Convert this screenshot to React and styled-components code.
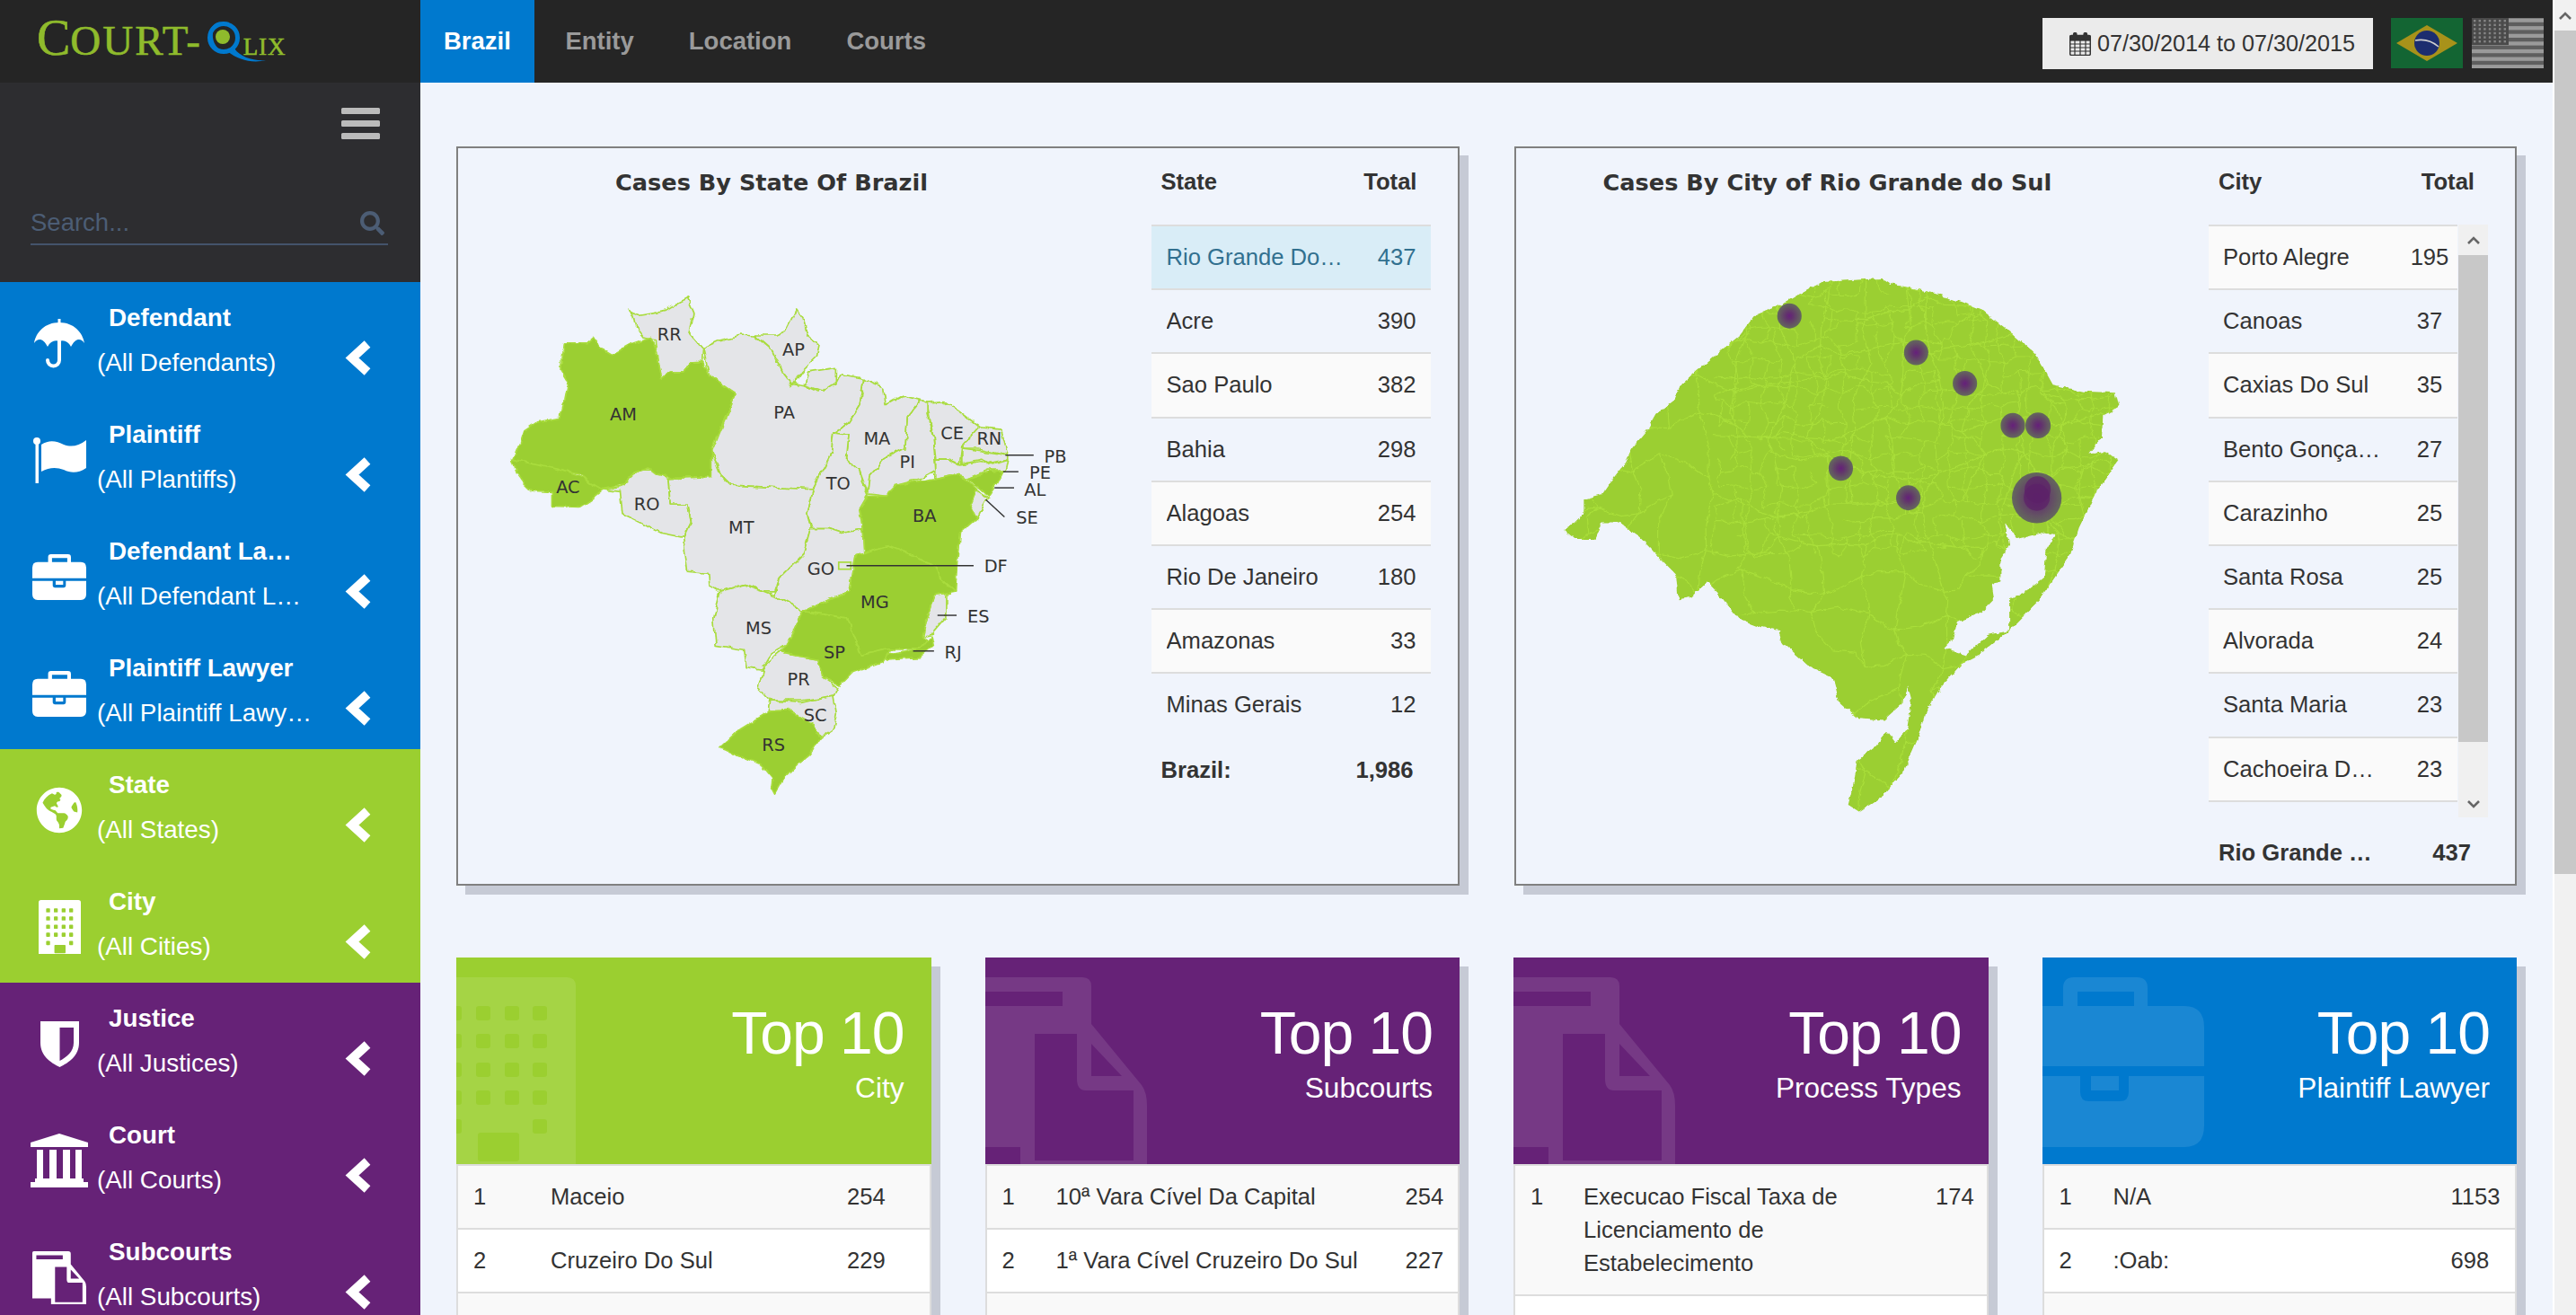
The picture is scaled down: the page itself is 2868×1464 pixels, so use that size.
import React, { useMemo } from 'react';
import styled, { createGlobalStyle } from 'styled-components';
import { FaGlobeAmericas, FaSearch } from 'react-icons/fa';

const BLUE = '#0079ce';
const GREEN = '#9bcf30';
const PURPLE = '#662277';
const PAGE = '#f0f4fc';

const GlobalStyle = createGlobalStyle`
  html, body { margin: 0; padding: 0; overflow: hidden; background: ${PAGE}; }
  * { box-sizing: border-box; }
  body { font-family: "Liberation Sans", Arial, sans-serif; color: #333; font-size: 25.6px; }
`;

const Page = styled.div`display: flex; height: 100vh; overflow: hidden;`;
const Sidebar = styled.aside`width: 468px; flex: none; background: #2d2d30; overflow: hidden;`;
const LogoBar = styled.div`height: 92px; background: #252525; display: flex; align-items: baseline; padding: 11px 0 0 41px; font-family: "Liberation Serif", serif; color: #8fbb2c; line-height: 50px; -webkit-text-stroke: 0.6px #8fbb2c;`;
const LogoBig = styled.span`font-size: 56px;`;
const LogoMid = styled.span`font-size: 47px; letter-spacing: 2px;`;
const LogoSmall = styled.span`font-size: 27px; margin-left: -27px; letter-spacing: 0.8px;`;
const LogoMark = styled.svg`width: 68px; height: 50px; margin: 0 0 0 5px; flex: none; overflow: visible;`;

const SideTools = styled.div`height: 222px; padding: 28px 45px 0 34px; display: flex; flex-direction: column;`;
const Burger = styled.div`align-self: flex-end; width: 43px; display: flex; flex-direction: column; gap: 7px; margin-right: 0;`;
const BurgerBar = styled.span`display: block; height: 7px; background: #bbb; border-radius: 1.5px;`;
const SearchBox = styled.div`margin-top: 70px; margin-right: -9px; height: 48px; border-bottom: 2px solid #44536b; display: flex; justify-content: space-between; align-items: center; color: #4c5d75; font-size: 27.5px; padding-right: 4px;`;

const NavGroup = styled.div`background: ${p => p.$bg};`;
const NavItem = styled.div`height: 130px; display: flex; color: #fff;`;
const IconCell = styled.div`width: 132px; height: 136px; flex: none; display: flex; align-items: center; justify-content: center;`;
const TextCell = styled.div`width: 275px; flex: none; margin-left: -24px; padding-top: 15px; line-height: 50px;`;
const NavTitle = styled.div`font-weight: 700; font-size: 27.8px; padding-left: 13px; width: 223px; white-space: nowrap; overflow: hidden; text-overflow: ellipsis;`;
const NavSub = styled.div`font-size: 27.8px; width: 240px; white-space: nowrap; overflow: hidden; text-overflow: ellipsis;`;
const ChevronCell = styled.svg`width: 30px; height: 45px; margin-top: 62px; flex: none;`;

const Column = styled.div`flex: 1; min-width: 0; display: flex; flex-direction: column;`;
const TopBar = styled.header`height: 92px; flex: none; background: #252525; display: flex; align-items: stretch; padding-right: 10px;`;
const Tab = styled.div`display: flex; align-items: center; padding: 0 ${p => (p.$active ? 26 : 30.5)}px; margin-left: ${p => (p.$first ? 4 : 0)}px; background: ${p => (p.$active ? BLUE : 'transparent')}; color: ${p => (p.$active ? '#fff' : '#9a9a9a')}; font-weight: 700; font-size: 27.5px;`;
const TopRight = styled.div`margin-left: auto; display: flex; align-items: flex-start; padding-top: 20px;`;
const DateButton = styled.div`width: 368px; height: 57px; background: #ebebeb; display: flex; align-items: center; gap: 7px; padding-left: 30px; font-size: 25.2px; color: #333; margin-right: 20px;`;
const Flag = styled.svg`width: 80px; height: 56px; margin-right: ${p => (p.$gap ? 10 : 0)}px; display: block;`;

const Content = styled.main`flex: 1; padding: 71px 40px 0; min-height: 0;`;
const MapRow = styled.div`display: grid; grid-template-columns: 1fr 1fr; gap: 61px; height: 823px;`;
const MapCard = styled.section`border: 2px solid #808080; box-shadow: 10px 10px 0 #c6cad5; display: grid; grid-template-columns: 1fr 311px; grid-template-rows: minmax(0, 1fr); padding-right: 30px; min-width: 0; min-height: 0;`;
const MapArea = styled.div`min-width: 0;`;
const CardTitle = styled.h2`margin: 0; padding-left: ${p => p.$indent}px; font: 700 25.6px/76px "DejaVu Sans", Verdana, sans-serif; color: #333; white-space: nowrap;`;
const MapSvg = styled.svg`display: block; margin: ${p => p.$mt}px 0 0 ${p => p.$ml}px; width: ${p => p.$w}px; height: ${p => p.$h}px;`;
const MapLabel = styled.text`font: 40px "DejaVu Sans", sans-serif; fill: #333; text-anchor: middle; dominant-baseline: central;`;

const TableCol = styled.div`min-width: 0;`;
const HeadRow = styled.div`height: 85px; display: flex; justify-content: space-between; padding: 0 15px 11px 11px; align-items: center; font-weight: 700; font-size: 25.6px;`;
const StatRow = styled.div`height: 71.2px; border-top: 2px solid #ddd; display: flex; align-items: center; padding-left: ${p => (p.$compact ? 16 : 17)}px; padding-right: ${p => (p.$compact ? 0 : 16)}px; justify-content: space-between; background: ${p => (p.$active ? '#d9edf7' : p.$odd ? '#fafafa' : 'transparent')}; color: ${p => (p.$active ? '#31708f' : '#333')}; &:last-child { border-bottom: ${p => (p.$compact ? '2px solid #ddd' : 'none')}; height: ${p => (p.$compact ? 73.2 : 71.2)}px; }`;
const StatName = styled.span`width: ${p => (p.$compact ? 180 : 202)}px; white-space: nowrap; overflow: hidden; text-overflow: ellipsis;`;
const StatValue = styled.span`${p => (p.$compact ? 'width: 62px; text-align: center;' : 'text-align: right;')}`;
const ScrollWrap = styled.div`display: flex; height: 660px; gap: 1px;`;
const RowList = styled.div`width: 277px; flex: none; overflow: hidden;`;
const MiniScroll = styled.div`width: 33px; flex: none; background: #f0f0f0; display: flex; flex-direction: column; align-items: center;`;
const ScrollCap = styled.div`height: ${p => p.$h}px; width: 100%; display: flex; align-items: ${p => p.$align || 'center'}; justify-content: center; padding-bottom: ${p => p.$pb || 0}px;`;
const ScrollThumb = styled.div`width: 100%; height: ${p => p.$h}px; background: #c8c8c8; flex: none;`;
const FootRow = styled.div`height: ${p => p.$h}px; display: flex; justify-content: space-between; align-items: center; padding: 0 19px 0 11px; font-weight: 700;`;
const FootName = styled.span`max-width: 180px; white-space: nowrap; overflow: hidden; text-overflow: ellipsis;`;

const TopGrid = styled.div`display: grid; grid-template-columns: repeat(4, 1fr); gap: 60px; margin-top: 80px;`;
const TopPanel = styled.section`background: #fff; box-shadow: 10px 10px 0 #c6cad5; min-width: 0;`;
const TopHead = styled.div`position: relative; height: 230px; overflow: hidden; background: ${p => p.$bg}; color: #fff; text-align: right; padding: 46px 30px 0 0;`;
const HeadGlyph = styled.svg`position: absolute; left: ${p => p.$left}px; top: 22px; width: ${p => p.$w}px; height: ${p => p.$h}px; fill: #fff; opacity: 0.1;`;
const TopTitle = styled.div`position: relative; font-size: 66px; line-height: 76px; letter-spacing: -1px;`;
const TopSub = styled.div`position: relative; font-size: 31.6px; line-height: 46px;`;
const RankRow = styled.div`display: grid; grid-template-columns: ${p => p.$cols}; padding: 15.5px 0 16.5px 17px; line-height: 37px; border: 2px solid #ddd; border-width: 2px 2px 0; background: ${p => (p.$odd ? '#f9f9f9' : '#fff')}; min-height: 71px;`;
const RankName = styled.div`padding-right: 22px;`;

const ScrollBar = styled.div`width: 26px; flex: none; background: #f1f1f1; border-left: 2px solid #fff; display: flex; flex-direction: column;`;

const Chevron = () => (
  <ChevronCell viewBox="0 0 30 45"><polyline points="26,7 9,22.5 26,38" fill="none" stroke="#fff" strokeWidth="10" /></ChevronCell>
);
const Arrow = ({ up }) => (
  <svg width="14" height="9" viewBox="0 0 14 9"><polyline points={up ? '1,8 7,2 13,8' : '1,1 7,7 13,1'} fill="none" stroke="#666" strokeWidth="2.6" /></svg>
);

const DOC = 'M-30 22H108Q118 22 118 32V74L174 142Q180 150 180 165V234H39V211H-36V28Q-36 22-30 22ZM-20 38V54H86V38ZM55 85V226H165V148H112Q102 148 102 135V85ZM118 96V132H152Z';
const CASE = 'M-20 54H158Q180 54 180 78V121H-42V78Q-42 54-20 54ZM-42 132H42V150Q42 160 52 160H86Q96 160 96 150V132H180V187Q180 211 158 211H-20Q-42 211-42 187ZM54 132H85V148H54ZM23 54V34Q23 22 35 22H105Q117 22 117 34V54H102V38H39V54Z';
const makeBuilding = () => {
  let d = 'M-31 22H123Q133 22 133 32V230H-41V32Q-41 22-31 22Z';
  const win = (x, y, w = 16, h = 16) => `M${x + 3} ${y}h${w - 6}q3 0 3 3v${h - 6}q0 3-3 3h-${w - 6}q-3 0-3-3v-${h - 6}q0-3 3-3z`;
  [54, 85, 117, 148].forEach(y => [-10, 22, 54, 85].forEach(x => { d += win(x, y); }));
  d += win(-10, 180) + win(85, 180) + win(24, 195, 46, 32);
  return d;
};
const BUILDING = makeBuilding();

const Umbrella = () => (
  <svg width="56" height="55" viewBox="0 0 56 55">
    <rect x="26.5" y="0" width="3" height="6" fill="#fff" />
    <path fill="#fff" d="M0 27C2 15 12 4 28 4C44 4 54 15 56 27C52 21 46 21 41 31C38 25 33 23 28 25C23 23 18 25 15 31C10 21 4 21 0 27Z" />
    <path fill="none" stroke="#fff" strokeWidth="4" strokeLinecap="round" d="M28 25V46a6.5 6.5 0 0 1-13 0" />
  </svg>
);
const FlagIcon = () => (
  <svg width="59" height="51" viewBox="0 0 59 51">
    <circle cx="4" cy="4" r="4" fill="#fff" /><rect x="2.5" y="6" width="3.5" height="45" fill="#fff" />
    <path fill="#fff" d="M9 8C18 2 26 4 34 8C42 11 50 10 59 3V34C50 40 42 40 34 36C26 33 18 33 9 38Z" />
  </svg>
);
const Briefcase = () => <svg width="60" height="51" viewBox="-42 22 222 189" preserveAspectRatio="none"><path fill="#fff" fillRule="evenodd" d={CASE} /></svg>;
const Building = () => <svg width="47" height="60" viewBox="-41 22 174 208" preserveAspectRatio="none"><path fill="#fff" fillRule="evenodd" d={BUILDING} /></svg>;
const Shield = () => <svg width="43" height="51" viewBox="0 0 43 51"><path fill="#fff" fillRule="evenodd" d="M0 0H43V24C43 38 32 46 21.5 51C11 46 0 38 0 24ZM21.5 7V44C29 40 37 34 37 24V7Z" /></svg>;
const Court = () => (
  <svg width="64" height="60" viewBox="0 0 64 60" fill="#fff">
    <path d="M32 0L64 10V15H0V10Z" />
    <rect x="7" y="18" width="7" height="33" /><rect x="21" y="18" width="8" height="33" /><rect x="36" y="18" width="8" height="33" /><rect x="50" y="18" width="7" height="33" />
    <rect x="5" y="50" width="54" height="4" /><rect x="0" y="54" width="64" height="6" />
  </svg>
);
const Files = () => <svg width="60" height="59" viewBox="-36 22 216 212" preserveAspectRatio="none"><path fill="#fff" fillRule="evenodd" d={DOC} /></svg>;
const Calendar = () => (
  <svg width="24" height="26" viewBox="0 0 24 26" fill="none" stroke="#333" strokeWidth="1.2">
    <rect x="0.7" y="3.5" width="22.6" height="22" rx="1.5" fill="#ebebeb" strokeWidth="1.5" />
    <rect x="1" y="4" width="22" height="5" fill="#333" />
    <path d="M1 13h22M1 17h22M1 21h22M6 9v16M12 9v16M18 9v16" />
    <rect x="4.5" y="0.5" width="3.5" height="6" rx="1.5" fill="#333" /><rect x="16" y="0.5" width="3.5" height="6" rx="1.5" fill="#333" />
  </svg>
);

const NAV = [
  { bg: BLUE, items: [
    ['Defendant', '(All Defendants)', <Umbrella />],
    ['Plaintiff', '(All Plantiffs)', <FlagIcon />],
    ['Defendant Lawyer', '(All Defendant Lawyers)', <Briefcase />],
    ['Plaintiff Lawyer', '(All Plaintiff Lawyers)', <Briefcase />],
  ] },
  { bg: GREEN, items: [
    ['State', '(All States)', <FaGlobeAmericas size={52} />],
    ['City', '(All Cities)', <Building />],
  ] },
  { bg: PURPLE, items: [
    ['Justice', '(All Justices)', <Shield />],
    ['Court', '(All Courts)', <Court />],
    ['Subcourts', '(All Subcourts)', <Files />],
  ] },
];

const STATES = [['Rio Grande Do Sul', '437'], ['Acre', '390'], ['Sao Paulo', '382'], ['Bahia', '298'], ['Alagoas', '254'], ['Rio De Janeiro', '180'], ['Amazonas', '33'], ['Minas Gerais', '12']];
const CITIES = [['Porto Alegre', '195'], ['Canoas', '37'], ['Caxias Do Sul', '35'], ['Bento Gonçalves', '27'], ['Carazinho', '25'], ['Santa Rosa', '25'], ['Alvorada', '24'], ['Santa Maria', '23'], ['Cachoeira Do Sul', '23']];

const TOP = [
  { bg: GREEN, sub: 'City', cols: '86px 330px 1fr', glyph: 'building', rows: [['1', 'Maceio', '254'], ['2', 'Cruzeiro Do Sul', '229'], ['3', '', '']] },
  { bg: PURPLE, sub: 'Subcourts', cols: '60px 389px 1fr', glyph: 'doc', rows: [['1', '10ª Vara Cível Da Capital', '254'], ['2', '1ª Vara Cível Cruzeiro Do Sul', '227'], ['3', '', '']] },
  { bg: PURPLE, sub: 'Process Types', cols: '59px 392px 1fr', glyph: 'doc', rows: [['1', 'Execucao Fiscal Taxa de Licenciamento de Estabelecimento', '174'], ['2', '', '']] },
  { bg: BLUE, sub: 'Plaintiff Lawyer', cols: '60px 376px 1fr', glyph: 'case', rows: [['1', 'N/A', '1153'], ['2', ':Oab:', '698'], ['3', '', '']] },
];

const G = GREEN;
const Y = '#e4e5e8';
const BR = [
  ['RR', Y, '413,405 440,415 470,410 500,405 530,385 550,375 565,410 555,455 585,490 583,520 555,522 540,545 510,545 490,565 480,520 475,470 450,465 430,440 425,415'],
  ['PA', Y, '585,490 625,472 670,460 705,462 745,495 770,550 790,570 820,575 850,590 890,570 900,550 955,560 945,620 920,660 885,685 880,730 860,770 838,815 650,805 625,780 605,730 660,595 600,555'],
  ['AP', Y, '705,460 755,460 775,450 800,400 815,420 825,460 850,480 845,510 810,545 790,575 770,550 745,495'],
  ['MJ', Y, '825,545 890,535 890,570 860,590 820,575'],
  ['RO', Y, '355,815 395,810 440,770 470,770 505,790 510,850 550,850 558,890 540,925 490,915 440,890 400,870 395,820'],
  ['MA', Y, '955,560 1000,580 1005,620 1040,600 1085,612 1055,650 1050,720 1000,745 970,780 965,825 945,770 915,745 920,690 885,685 920,660 945,620'],
  ['PI', Y, '1085,612 1100,615 1100,640 1115,700 1120,770 1085,790 1030,805 1005,830 965,825 970,780 1000,745 1050,720 1055,650'],
  ['CE', Y, '1100,615 1140,612 1180,640 1220,670 1180,715 1175,755 1150,745 1120,745 1115,700'],
  ['RN', Y, '1220,670 1270,675 1285,735 1220,720 1185,720 1180,715'],
  ['PB', Y, '1180,720 1220,725 1285,735 1285,745 1240,755 1225,745 1180,755'],
  ['PE', Y, '1120,745 1150,745 1175,757 1225,750 1240,758 1285,745 1280,770 1240,770 1195,790 1160,780 1120,790'],
  ['SE', Y, '1200,810 1240,835 1215,880 1195,850'],
  ['TO', Y, '885,685 920,690 915,745 945,770 950,795 965,825 945,860 952,905 905,915 875,905 835,905 825,870 838,815 860,770 880,730'],
  ['MT', Y, '505,790 605,785 605,730 625,780 650,805 838,815 825,870 832,905 815,965 760,1020 750,1050 725,1050 680,1035 625,1050 600,1035 598,1010 550,1005 540,930 558,890 550,850 510,850'],
  ['GO', Y, '832,905 875,905 905,915 952,905 955,960 935,965 920,1050 880,1065 815,1095 750,1060 760,1020 815,965'],
  ['ES', Y, '1115,1060 1145,1055 1145,1110 1115,1145 1090,1150 1100,1110'],
  ['MS', Y, '625,1050 680,1035 725,1050 750,1060 815,1095 780,1170 740,1195 720,1230 685,1225 680,1185 615,1175 610,1110'],
  ['PR', Y, '760,1190 850,1205 860,1245 895,1270 885,1290 810,1300 740,1300 712,1270 725,1220'],
  ['SC', Y, '738,1300 810,1305 885,1288 892,1330 885,1365 855,1385 840,1360 780,1335 735,1325'],
  ['AM', G, '265,478 320,478 335,465 350,490 375,505 420,480 465,465 480,500 490,560 510,545 540,545 555,522 585,522 600,555 660,595 605,720 605,785 510,787 480,780 460,765 430,775 400,805 350,815 300,780 250,770 150,745 165,710 175,680 205,660 258,650 275,565 260,540 260,510'],
  ['AC', G, '145,745 250,768 300,785 355,815 330,835 300,855 240,853 240,822 195,820 170,795 155,775'],
  ['AL', G, '1195,790 1240,775 1275,770 1260,800 1240,830 1210,805'],
  ['BA', G, '1120,790 1160,780 1195,795 1215,815 1200,850 1215,880 1175,915 1170,970 1165,1050 1130,1020 1120,990 1010,945 955,960 950,880 945,860 965,830 1005,830 1030,805 1085,795'],
  ['MG', G, '955,960 1010,945 1120,990 1130,1020 1165,1050 1115,1060 1100,1110 1090,1150 1110,1170 1085,1180 1020,1180 950,1195 930,1150 915,1110 815,1095 880,1065 920,1050 935,965'],
  ['RJ', G, '1085,1180 1110,1150 1115,1175 1085,1200 1010,1205 1000,1195'],
  ['SP', G, '815,1095 915,1110 930,1150 950,1195 1020,1180 1000,1210 930,1235 900,1265 860,1245 850,1205 760,1190 780,1170'],
  ['RS', G, '735,1325 780,1322 840,1355 855,1385 830,1425 800,1450 770,1480 750,1515 742,1500 745,1480 720,1450 650,1420 622,1410 670,1365'],
];
const BR_LABELS = [['RR', 508, 458], ['AP', 793, 495], ['AM', 402, 643], ['PA', 772, 638], ['MA', 985, 698], ['CE', 1158, 687], ['RN', 1243, 698], ['PB', 1395, 740], ['PE', 1360, 777], ['AL', 1348, 815], ['SE', 1330, 880], ['PI', 1055, 752], ['AC', 275, 810], ['RO', 456, 850], ['TO', 896, 802], ['BA', 1094, 875], ['MT', 673, 903], ['GO', 856, 998], ['DF', 1258, 992], ['MG', 980, 1074], ['ES', 1218, 1107], ['MS', 713, 1134], ['SP', 887, 1190], ['RJ', 1160, 1190], ['PR', 805, 1252], ['SC', 843, 1334], ['RS', 747, 1403]];
const BR_LEADERS = ['1280,736 1345,736', '1275,774 1310,774', '1255,811 1300,811', '1235,838 1278,878', '915,990 1207,990', '1124,1104 1168,1104', '1068,1186 1116,1186'];

const RS_OUTLINE = '125,885 150,870 175,845 175,815 215,805 240,770 265,738 285,700 320,660 340,625 380,595 400,555 430,530 480,490 530,450 565,405 640,375 680,352 720,330 800,325 860,322 880,335 960,350 1040,375 1090,395 1150,440 1210,490 1250,560 1320,575 1395,578 1403,610 1365,630 1362,680 1330,715 1370,710 1400,730 1350,800 1310,880 1290,940 1220,1040 1150,1110 1080,1165 1040,1185 990,1240 960,1290 945,1340 910,1420 860,1480 805,1515 780,1500 795,1440 800,1400 840,1370 870,1335 890,1360 915,1330 925,1270 915,1235 905,1270 860,1310 800,1305 760,1270 745,1215 690,1190 630,1140 620,1110 570,1100 530,1085 495,1040 455,1000 420,1035 390,1040 385,985 350,950 300,900 255,870 215,870 200,905 150,905';
const LAGOON = '1140,870 1170,905 1230,890 1255,895 1235,930 1230,990 1190,1020 1150,1040 1150,1110 1100,1120 1050,1165 1000,1150 1020,1130 1030,1090 1085,1070 1115,1040 1110,1010 1130,1000 1130,950 1150,920';
const BUBBLES = [[645, 406, 28], [936, 488, 28], [1048, 557, 28], [1158, 651, 28], [1216, 651, 29], [763, 747, 28], [918, 813, 28], [1213, 813, 57]];
const BUBBLE_CORES = [[1215, 795, 30], [1213, 812, 30]];

const mesh = (x0, y0, x1, y1, cell, seed, keep) => {
  let s = seed;
  const r = () => { s = (s * 16807) % 2147483647; return s / 2147483647; };
  const nx = Math.ceil((x1 - x0) / cell), ny = Math.ceil((y1 - y0) / cell);
  const pts = [];
  for (let j = 0; j <= ny; j++) { pts.push([]); for (let i = 0; i <= nx; i++) pts[j].push([x0 + i * cell + (r() - 0.5) * cell * 0.7, y0 + j * cell + (r() - 0.5) * cell * 0.7]); }
  const seg = (a, b) => {
    if (r() > keep) return '';
    const mx = (a[0] + b[0]) / 2 + (r() - 0.5) * cell * 0.35, my = (a[1] + b[1]) / 2 + (r() - 0.5) * cell * 0.35;
    return `M${a[0].toFixed(0)} ${a[1].toFixed(0)}L${mx.toFixed(0)} ${my.toFixed(0)}L${b[0].toFixed(0)} ${b[1].toFixed(0)}`;
  };
  let d = '';
  for (let j = 0; j <= ny; j++) for (let i = 0; i <= nx; i++) {
    if (i < nx) d += seg(pts[j][i], pts[j][i + 1]);
    if (j < ny) d += seg(pts[j][i], pts[j + 1][i]);
  }
  return d;
};

const Wobble = ({ id, freq, scale }) => (
  <filter id={id} x="-5%" y="-5%" width="110%" height="110%">
    <feTurbulence type="fractalNoise" baseFrequency={freq} numOctaves="3" seed="7" />
    <feDisplacementMap in="SourceGraphic" scale={scale} xChannelSelector="R" yChannelSelector="G" />
  </filter>
);

const BrazilMap = () => (
  <MapSvg viewBox="140 370 1290 1150" $ml={57} $mt={88} $w={625} $h={558}>
    <defs><Wobble id="br-wobble" freq="0.035" scale="14" /></defs>
    <g filter="url(#br-wobble)">
      {BR.map(([id, fill, pts]) => <polygon key={id} points={pts} fill={fill} stroke="#a9dc3e" strokeWidth="3.5" strokeLinejoin="round" />)}
    </g>
    <rect x="897" y="982" width="28" height="16" fill={Y} stroke="#a9dc3e" strokeWidth="3.5" />
    {BR_LEADERS.map(p => <polyline key={p} points={p} stroke="#333" strokeWidth="3" fill="none" />)}
    {BR_LABELS.map(([t, x, y]) => <MapLabel key={t} x={x} y={y}>{t}</MapLabel>)}
  </MapSvg>
);

const RsMap = () => {
  const coarse = useMemo(() => mesh(100, 300, 1420, 1530, 88, 4711, 0.85), []);
  const fine = useMemo(() => mesh(480, 320, 1400, 900, 36, 991, 0.8), []);
  return (
    <MapSvg viewBox="100 300 1320 1230" preserveAspectRatio="none" $ml={40} $mt={58} $w={640} $h={612}>
      <defs>
        <clipPath id="rs-clip"><polygon points={RS_OUTLINE} /></clipPath>
        <Wobble id="rs-wobble" freq="0.05" scale="12" />
        <radialGradient id="bub">
          <stop offset="0" stopColor="#661f7b" />
          <stop offset="0.3" stopColor="#5f2b70" stopOpacity="0.95" />
          <stop offset="1" stopColor="#5f5f60" stopOpacity="0.92" />
        </radialGradient>
      </defs>
      <g filter="url(#rs-wobble)">
        <polygon points={RS_OUTLINE} fill={GREEN} />
        <g clipPath="url(#rs-clip)" fill="none" stroke="#a9de3a">
          <path d={coarse} strokeWidth="2.6" />
          <path d={fine} strokeWidth="2.2" />
        </g>
        <polygon points={LAGOON} fill={PAGE} />
      </g>
      {BUBBLES.map(([x, y, r], i) => <circle key={i} cx={x} cy={y} r={r} fill="url(#bub)" />)}
      {BUBBLE_CORES.map(([x, y, r], i) => <circle key={i} cx={x} cy={y} r={r} fill="#5c2168" fillOpacity="0.75" />)}
    </MapSvg>
  );
};

const BrazilFlag = () => (
  <Flag viewBox="0 0 80 56" $gap>
    <rect width="80" height="56" fill="#136533" />
    <polygon points="40,8 74,28 40,48 6,28" fill="#a8921a" />
    <circle cx="40" cy="28" r="14" fill="#1c2d6f" />
    <path d="M27 25c10-2 19 1 26 7" stroke="#cfcfcf" strokeWidth="1.6" fill="none" />
  </Flag>
);
const UsFlag = () => (
  <Flag viewBox="0 0 80 56">
    <rect width="80" height="56" fill="#5e5e5e" />
    {Array.from({ length: 7 }, (_, i) => <rect key={i} y={i * 8.6 + 0.5} width="80" height="4.3" fill="#9a9a9a" />)}
    <rect width="41" height="30" fill="#4a4a4a" />
    {Array.from({ length: 42 }, (_, i) => <rect key={i} x={2 + (i % 7) * 5.6} y={2 + Math.floor(i / 7) * 4.6} width="2.4" height="2.4" fill="#858585" />)}
  </Flag>
);

export default function App() {
  return (
    <>
      <GlobalStyle />
      <Page>
        <Sidebar>
          <LogoBar>
            <LogoBig>C</LogoBig><LogoMid>OURT-</LogoMid>
            <LogoMark viewBox="0 -9 68 50">
              <circle cx="19" cy="22" r="15.5" fill="none" stroke={BLUE} strokeWidth="5" />
              <path d="M2 22C2 12 8 5 16 4C9 7 6 14 7 22C8 29 12 34 17 37C8 36 2 30 2 22Z" fill={BLUE} />
              <circle cx="18" cy="21" r="8" fill="#8fbb2c" />
              <path d="M22 36C33 46 50 51 66 47C52 48 38 44 31 34Z" fill={BLUE} />
            </LogoMark>
            <LogoSmall>LIX</LogoSmall>
          </LogoBar>
          <SideTools>
            <Burger><BurgerBar /><BurgerBar /><BurgerBar /></Burger>
            <SearchBox><span>Search...</span><FaSearch size={27} /></SearchBox>
          </SideTools>
          {NAV.map(g => (
            <NavGroup key={g.bg} $bg={g.bg}>
              {g.items.map(([title, sub, icon]) => (
                <NavItem key={title}>
                  <IconCell>{icon}</IconCell>
                  <TextCell><NavTitle>{title}</NavTitle><NavSub>{sub}</NavSub></TextCell>
                  <Chevron />
                </NavItem>
              ))}
            </NavGroup>
          ))}
        </Sidebar>
        <Column>
          <TopBar>
            <Tab $active>Brazil</Tab>
            <Tab $first>Entity</Tab>
            <Tab>Location</Tab>
            <Tab>Courts</Tab>
            <TopRight>
              <DateButton><Calendar />07/30/2014 to 07/30/2015</DateButton>
              <BrazilFlag /><UsFlag />
            </TopRight>
          </TopBar>
          <Content>
            <MapRow>
              <MapCard>
                <MapArea>
                  <CardTitle $indent={175}>Cases By State Of Brazil</CardTitle>
                  <BrazilMap />
                </MapArea>
                <TableCol>
                  <HeadRow><span>State</span><span>Total</span></HeadRow>
                  {STATES.map(([n, v], i) => (
                    <StatRow key={n} $active={i === 0} $odd={i % 2 === 0}><StatName>{n}</StatName><StatValue>{v}</StatValue></StatRow>
                  ))}
                  <FootRow $h={76}><FootName>Brazil:</FootName><span>1,986</span></FootRow>
                </TableCol>
              </MapCard>
              <MapCard>
                <MapArea>
                  <CardTitle $indent={97}>Cases By City of Rio Grande do Sul</CardTitle>
                  <RsMap />
                </MapArea>
                <TableCol>
                  <HeadRow><span>City</span><span>Total</span></HeadRow>
                  <ScrollWrap>
                    <RowList>
                      {CITIES.map(([n, v], i) => (
                        <StatRow key={n} $compact $odd={i % 2 === 0}><StatName $compact>{n}</StatName><StatValue $compact>{v}</StatValue></StatRow>
                      ))}
                    </RowList>
                    <MiniScroll>
                      <ScrollCap $h={34}><Arrow up /></ScrollCap>
                      <ScrollThumb $h={542} />
                      <ScrollCap $h={84} $align="flex-end" $pb={10}><Arrow /></ScrollCap>
                    </MiniScroll>
                  </ScrollWrap>
                  <FootRow $h={78}><FootName>Rio Grande do Sul</FootName><span>437</span></FootRow>
                </TableCol>
              </MapCard>
            </MapRow>
            <TopGrid>
              {TOP.map(t => (
                <TopPanel key={t.sub}>
                  <TopHead $bg={t.bg}>
                    {t.glyph === 'building' && <HeadGlyph viewBox="-41 22 174 208" $left={-41} $w={174} $h={208}><path fillRule="evenodd" d={BUILDING} /></HeadGlyph>}
                    {t.glyph === 'doc' && <HeadGlyph viewBox="-36 22 216 212" $left={-36} $w={216} $h={212}><path fillRule="evenodd" d={DOC} /></HeadGlyph>}
                    {t.glyph === 'case' && <HeadGlyph viewBox="-42 22 222 189" $left={-42} $w={222} $h={189}><path fillRule="evenodd" d={CASE} /></HeadGlyph>}
                    <TopTitle>Top 10</TopTitle>
                    <TopSub>{t.sub}</TopSub>
                  </TopHead>
                  {t.rows.map(([r, n, v], i) => (
                    <RankRow key={r} $cols={t.cols} $odd={i % 2 === 0}><span>{r}</span><RankName>{n}</RankName><span>{v}</span></RankRow>
                  ))}
                </TopPanel>
              ))}
            </TopGrid>
          </Content>
        </Column>
        <ScrollBar>
          <ScrollCap $h={34}><Arrow up /></ScrollCap>
          <ScrollThumb $h={939} />
        </ScrollBar>
      </Page>
    </>
  );
}
